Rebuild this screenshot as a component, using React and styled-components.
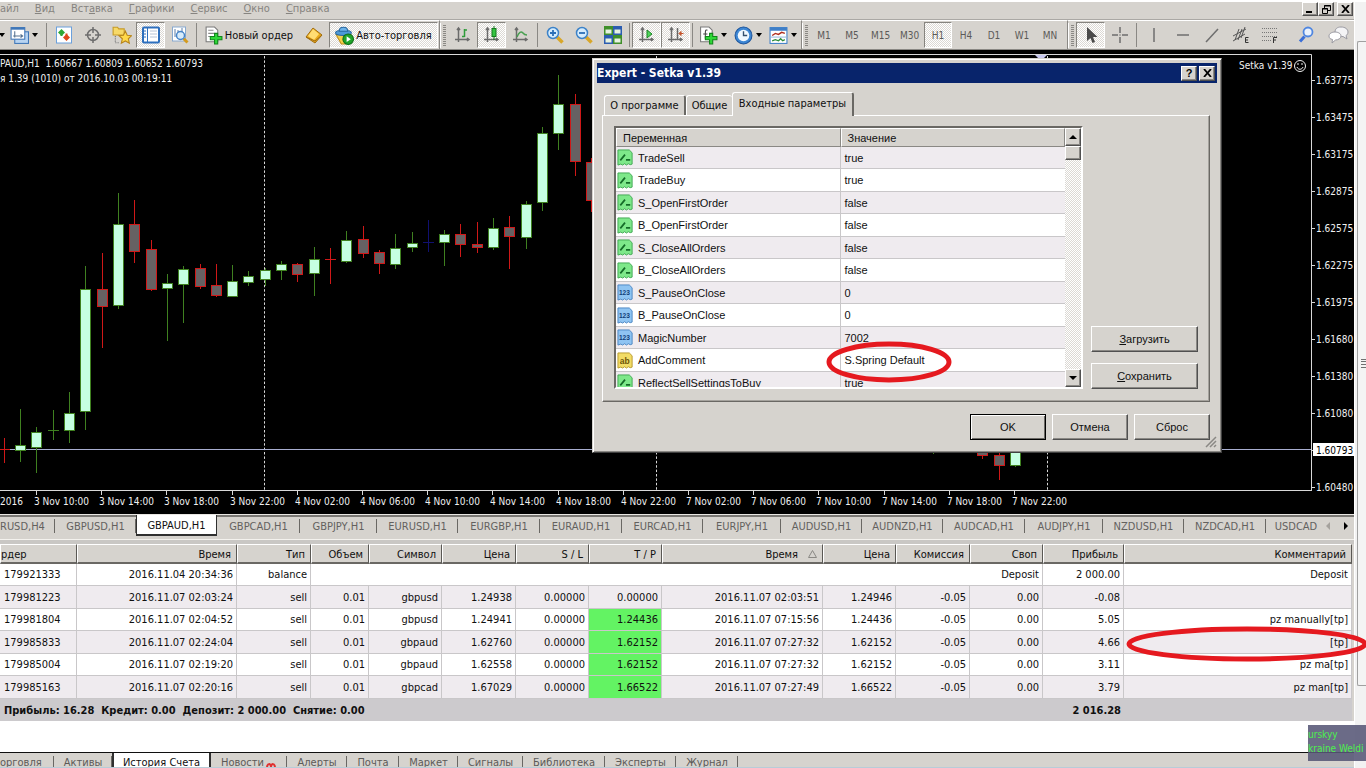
import React from 'react'
import styled, { createGlobalStyle, css } from 'styled-components'

const GlobalStyle = createGlobalStyle`
  * {
    box-sizing: border-box;
  }

  body {
    margin: 0;
    background: #d6d3ce;
    font-family: "DejaVu Sans Condensed", "DejaVu Sans", sans-serif;
    font-size: 11px;
    color: #101010;
    overflow: hidden;
  }

  button {
    font: inherit;
    color: inherit;
    border: 0;
    padding: 0;
    background: none;
  }

  svg {
    display: block;
    flex: none;
  }
`

const raised = css`
  border: 1px solid;
  border-color: #fff #505050 #505050 #fff;
  box-shadow: inset -1px -1px 0 #8a8884;
`

const dither = css`
  background: repeating-conic-gradient(#ffffff 0 25%, #dcd9d4 0 50%) 0 0 / 2px 2px;
`

const Page = styled.div`
  position: relative;
  display: flex;
  height: 100vh;
  overflow: hidden;
`

const Terminal = styled.main`
  flex: 1;
  min-width: 0;
  display: flex;
  flex-direction: column;
  background: #d6d3ce;
  border-top: 2px solid #fff;
`

/* menu */

const MenuBar = styled.nav`
  display: flex;
  align-items: flex-start;
  height: 17px;
  color: #868480;
`

const MenuList = styled.div`
  flex: 1;
  display: flex;
  gap: 16px;

  a {
    color: inherit;
    text-decoration: none;
    line-height: 14px;
  }
`

const WindowButtons = styled.div`
  display: flex;
  padding-right: 1px;

  button:last-child {
    margin-left: 3px;
  }
`

const SquareButton = styled.button`
  ${raised}
  display: flex;
  align-items: center;
  justify-content: center;
  width: 16px;
  height: ${p => p.$h || 14}px;
  background: #d6d3ce;
  color: #000;
`

/* toolbar */

const ToolRow = styled.div`
  display: flex;
  height: 31px;
  border-top: 1px solid #aaa8a4;
  border-bottom: 1px solid #8a8884;
  overflow: hidden;
`

const ToolGroup = styled.div`
  display: flex;
  align-items: center;
  padding-right: ${p => p.$end || 0}px;
  border-top: 1px solid #fff;
  border-right: ${p => (p.$fill ? 0 : 1)}px solid #8a8884;
  flex: ${p => (p.$fill ? 1 : 'none')};
`

const Grip = styled.span`
  width: 8px;
  height: 25px;
  border-left: 1px solid #fff;
  background: repeating-linear-gradient(#8a8884 0 1px, transparent 1px 2px) 2px 2px / 3px 21px no-repeat;
`

const Tool = styled.button`
  display: flex;
  align-items: center;
  justify-content: center;
  gap: ${p => p.$gap || 4}px;
  flex: none;
  width: ${p => p.$w || 29}px;
  height: 26px;
  font-size: ${p => (p.$period ? 10 : 11)}px;
  color: ${p => (p.$period ? '#5c5a58' : '#101010')};
  white-space: nowrap;
  ${p => p.$on && css`
    ${dither}
    border: 1px solid;
    border-color: #86847f #fff #fff #86847f;
  `}
`

const Split = styled.span`
  width: 5px;
  height: 24px;
  background: linear-gradient(#8a8884, #8a8884) 2px 0 / 1px 100% no-repeat;
`

const RightTools = styled.div`
  display: flex;
  margin-left: auto;
`

/* chart */

const ChartArea = styled.section`
  position: relative;
  flex: 1;
  min-height: 0;
  background: #000;

  > svg {
    width: 100%;
    height: 100%;
  }

  > svg text {
    font-size: 10px;
    fill: #f0f0f0;
  }
`

/* expert dialog */

const Dialog = styled.section`
  position: absolute;
  left: 592px;
  top: 8px;
  width: 630px;
  padding: 4px;
  background: #d6d3ce;
  border: 1px solid;
  border-color: #d6d3ce #404040 #404040 #d6d3ce;
  box-shadow: inset 1px 1px 0 #fff, inset -1px -1px 0 #8a8884;
  font-family: "Liberation Sans", Arial, sans-serif;
`

const TitleBar = styled.header`
  display: flex;
  align-items: center;
  gap: 2px;
  height: 20px;
  padding: 0 2px 0 0;
  background: #08246b;
  color: #fff;

  h2 {
    flex: 1;
    margin: 0;
    font: bold 12px "DejaVu Sans Condensed", "DejaVu Sans", sans-serif;
  }
`

const DialogTabs = styled.div`
  display: flex;
  align-items: flex-end;
  height: 32px;
  padding-left: 7px;
`

const DialogTab = styled.button`
  width: ${p => p.$w}px;
  height: ${p => (p.$on ? 24 : 20)}px;
  margin-bottom: ${p => (p.$on ? -1 : 0)}px;
  padding-bottom: ${p => (p.$on ? 3 : 0)}px;
  background: #d6d3ce;
  border: 1px solid #fff;
  border-bottom: 0;
  border-right: ${p => (p.$flat ? '0' : '2px solid #6a6864')};
  border-radius: 3px 3px 0 0;
  font-family: "DejaVu Sans Condensed", "DejaVu Sans", sans-serif;
  white-space: nowrap;
  z-index: ${p => (p.$on ? 1 : 0)};
`

const TabPanel = styled.div`
  display: flex;
  gap: 8px;
  margin: 0 7px 0 5px;
  padding: 10px 11px 12px 11px;
  border: 1px solid;
  border-color: #fff #6a6864 #6a6864 #fff;
  box-shadow: inset -1px -1px 0 #a5a29d;
`

const ListBox = styled.div`
  display: flex;
  flex: 1;
  height: 263px;
  overflow: hidden;
  border: 2px solid;
  border-color: #6a6864 #fff #fff #6a6864;
  background: #fff;
`

const ListBody = styled.div`
  flex: 1;
  min-width: 0;
`

const ParamTable = styled.table`
  width: 100%;
  border-collapse: separate;
  border-spacing: 0;
  table-layout: fixed;

  th {
    height: 19px;
    padding: 0 6px;
    background: #d6d3ce;
    border: 1px solid;
    border-color: #fff #8a8884 #8a8884 #fff;
    font-weight: normal;
    text-align: left;
  }

  td {
    height: 22px;
    padding: 0 4px;
    border-bottom: 1px solid #c9c7c9;
    line-height: 14px;
  }

  tr:nth-child(even) td {
    height: 23px;
  }

  tbody tr:nth-child(odd) {
    background: #efebef;
  }

  td:first-child {
    padding-left: 1px;
    border-right: 1px solid #c9c7c9;
  }
`

const ParamName = styled.span`
  display: flex;
  align-items: center;
  gap: 4px;
`

const ScrollTrack = styled.div`
  ${dither}
  display: flex;
  flex-direction: column;
  width: 16px;
`

const ScrollThumb = styled.div`
  ${raised}
  height: 14px;
  background: #d6d3ce;
  margin-bottom: auto;
`

const SideButtons = styled.div`
  display: flex;
  flex-direction: column;
  justify-content: flex-end;
  gap: 11px;
  width: 107px;
`

const PushButton = styled.button`
  ${raised}
  height: 26px;
  min-width: 76px;
  background: #d6d3ce;
  font-size: 11px;
  ${p => p.$default && css`
    border-color: #000;
    box-shadow: inset 1px 1px 0 #fff, inset -1px -1px 0 #6a6864;
  `}
`

const DialogFooter = styled.footer`
  position: relative;
  display: flex;
  justify-content: flex-end;
  gap: 6px;
  padding: 12px 7px 8px;
`

const ResizeGrip = styled.svg`
  position: absolute;
  right: 0;
  bottom: 0;
`

/* symbol tabs */

const SymbolTabs = styled.div`
  display: flex;
  height: 26px;
  padding-bottom: 3px;
  border-top: 1px solid #e8e6e2;
  border-bottom: 1px solid #f4f2ee;
  box-shadow: inset 0 2px 0 #7a7874;
  color: #63615e;
  overflow: hidden;
`

const SymbolTab = styled.button`
  flex: none;
  width: ${p => p.$w}px;
  padding-top: 1px;
  text-align: ${p => (p.$first ? 'left' : 'center')};
  white-space: nowrap;
  background: linear-gradient(#6a6864, #6a6864) right 4px / 1px 14px no-repeat;
  ${p => p.$plain && css`background: none;`}
  ${p => p.$on && css`
    background: #fff;
    color: #101010;
    padding-top: 2px;
    border: solid #303030;
    border-width: 0 1px 2px;
  `}
`

const TabArrows = styled.span`
  display: flex;
  align-items: center;
  gap: 14px;
  margin-left: auto;
  padding-right: 6px;
`

/* account history */

const History = styled.section`
  background: #fff;
  padding-bottom: 31px;
  border-top: 4px solid #c9c7c4;
`

const HistoryTable = styled.table`
  width: 100%;
  table-layout: fixed;
  border-collapse: separate;
  border-spacing: 0;
  border-right: 2px solid #d6d3ce;
  text-align: right;
  white-space: nowrap;

  th {
    height: 20px;
    padding: 1px 5px 0;
    background: #d6d3ce;
    border: 1px solid #fff;
    border-right: 1px solid #5a5854;
    border-bottom: 2px solid #6a6864;
    font-weight: normal;
  }

  td {
    height: 22px;
    padding: 1px 3px 0;
    border-right: 1px solid #c9c7c9;
    border-bottom: 1px solid #c9c7c9;
    line-height: 14px;
  }

  tr:nth-child(even) td {
    height: 23px;
  }

  tbody tr:nth-child(even) {
    background: #efebef;
  }

  th:first-child {
    text-align: left;
    padding-left: 0;
  }

  td:first-child {
    text-align: left;
    padding-left: 4px;
  }

  tfoot td {
    background: #cccacd;
    border: 0;
    font-weight: bold;
  }
`

const PriceCell = styled.td`
  background: ${p => (p.$hit ? '#63f363' : 'transparent')};
  background-clip: padding-box;
`

const SortMark = styled.svg`
  display: inline-block;
  margin-left: 10px;
`

const BottomTabs = styled.div`
  display: flex;
  height: 16px;
  overflow: hidden;
  border-top: 1px solid #101010;
  border-bottom: 1px solid #b8ccd8;
  color: #5c5a58;
`

const BottomTab = styled.button`
  display: flex;
  align-items: flex-start;
  justify-content: center;
  flex: none;
  width: ${p => p.$w}px;
  height: 24px;
  padding-top: 3px;
  line-height: 13px;
  background: linear-gradient(#6a6864, #6a6864) right 3px / 1px 14px no-repeat;
  white-space: nowrap;
  ${p => p.$first && css`justify-content: flex-start;`}
  ${p => p.$on && css`
    background: #fff;
    color: #101010;
    margin-top: -1px;
    padding-top: 4px;
    border: solid #303030;
    border-width: 0 2px;
  `}
`

/* outer window */

const OuterScroll = styled.aside`
  width: 12px;
  padding: 39px 0 82px 2px;
  background: #f2f2f2;
  border-top: 2px solid #fff;
  border-left: 1px solid #fff;

  div {
    height: 100%;
    border: 1px solid #a0a0a0;
    border-right: 0;
    border-radius: 2px 0 0 2px;
    background: #f4f4f4;
    display: flex;
    align-items: center;
    justify-content: flex-end;
  }
`

const Watermark = styled.div`
  position: absolute;
  right: 0;
  bottom: 7px;
  min-width: 58px;
  height: 36px;
  padding-top: 3px;
  background: rgba(86, 86, 118, 0.88);
  color: #4df04d;
  font-size: 10px;
  line-height: 14px;
  white-space: nowrap;
`

const Marks = styled.svg`
  position: absolute;
  left: 0;
  top: 0;
  width: 100%;
  height: 100%;
  pointer-events: none;
`

const Down = () => (
  <svg width="6" height="4"><path d="M0 0h6L3 4z" fill="#000" /></svg>
)

const Icon = ({ size = 18, children }) => (
  <svg width={size} height={size} viewBox="0 0 18 18" fill="none">{children}</svg>
)

const Axes = () => (
  <path d="M4.5 2v14M1 13.5h14M3 4l1.500-2L6 4M13 12l2 1.500-2 1.500" stroke="#6b6b6b" strokeWidth="1.500" />
)

const Plus = () => (
  <path d="M10 8h3v3h4v3h-4v4h-3v-4H6v-3h4z" fill="#2fd838" stroke="#11841a" transform="translate(0 -1)" />
)

const icons = {
  windows: (
    <Icon size={19}>
      <rect x="4.500" y="5.500" width="13" height="11" fill="#b8d4f2" stroke="#3f76b8" />
      <rect x="1" y="1.500" width="13" height="11" fill="#fff" stroke="#3f76b8" />
      <path d="M1 2.500h13" stroke="#3f76b8" strokeWidth="2" />
      <path d="M4.500 5v6M3 9.500h9M10 8l2 1.500-2 1.500" stroke="#55718f" />
    </Icon>
  ),
  market: (
    <Icon>
      <rect x="1.500" y="1" width="15" height="16" fill="#fff" stroke="#6ba0dc" />
      <path d="M6.500 3L10 6.500 6.500 10 3 6.500z" fill="#2ea836" />
      <path d="M5.500 7h2v3h-2z" fill="#2ea836" />
      <path d="M11.500 8L15 11.500 11.500 15 8 11.500z" fill="#e0491c" />
      <path d="M10.500 7.500h2v3h-2z" fill="#e0491c" />
    </Icon>
  ),
  target: (
    <Icon>
      <circle cx="9" cy="9" r="5.500" stroke="#6e6e6e" strokeWidth="1.500" />
      <path d="M9 1v6M9 11v6M1 9h6M11 9h6" stroke="#6e6e6e" strokeWidth="1.500" />
    </Icon>
  ),
  favorites: (
    <Icon size={20}>
      <path d="M1 2h4l1 1.500h5V9H1z" fill="#f7d968" stroke="#c79b25" />
      <path d="M3 10v6h4" stroke="#777" strokeDasharray="1 1" />
      <path d="M12 5.500l1.700 3.700 4 .4-3 2.800.9 4-3.600-2-3.600 2 .9-4-3-2.800 4-.4z" fill="#ffd94a" stroke="#b8861b" />
    </Icon>
  ),
  navigator: (
    <Icon>
      <rect x="1" y="1.500" width="16" height="15" rx="1" fill="#fff" stroke="#2d6fbd" strokeWidth="2" />
      <path d="M5.500 2v14" stroke="#2d6fbd" />
      <path d="M2 5h2M2 8h2M2 11h2" stroke="#2d6fbd" />
      <path d="M8 5h7M8 8h7M8 11h7" stroke="#b6c4d6" />
    </Icon>
  ),
  tester: (
    <Icon>
      <rect x="1.500" y="1" width="13" height="14" fill="#fff" stroke="#88a9cf" />
      <path d="M4 3v8M7 4v7M11 2v7" stroke="#5b7da8" />
      <path d="M12.500 12.500l4 4" stroke="#d49b1f" strokeWidth="3" />
      <circle cx="9.500" cy="9.500" r="4" fill="#d8ecfb" stroke="#4684c8" strokeWidth="1.500" />
    </Icon>
  ),
  order: (
    <Icon size={19}>
      <path d="M2 1h8l3 3v11H2z" fill="#fff" stroke="#7a7a7a" />
      <path d="M4 4h5M4 7h6M4 10h4" stroke="#8a8a8a" />
      <Plus />
    </Icon>
  ),
  gold: (
    <Icon>
      <path d="M1 11L8 2l9 7-7 8z" fill="#e9a91c" stroke="#a06d10" />
      <path d="M3 10l5-7 6 5-5 6z" fill="#ffdc73" />
      <path d="M1 11l9 4 7-6" stroke="#a06d10" />
    </Icon>
  ),
  auto: (
    <Icon size={19}>
      <path d="M1 8h14l-5 9H6z" fill="#f5cf4b" stroke="#c29018" />
      <ellipse cx="8" cy="6.500" rx="7.500" ry="2.500" fill="#4d9ad8" stroke="#2768a0" />
      <path d="M4 5c0-5 8-5 8 0z" fill="#6db4ea" stroke="#2768a0" />
      <circle cx="12.500" cy="12.500" r="5" fill="#20a52a" stroke="#0c6c14" />
      <path d="M11 9.800l4 2.700-4 2.700z" fill="#fff" />
    </Icon>
  ),
  bars: <Icon><Axes /><path d="M10.500 3v8M10.500 4H13M8 10.500h2.500" stroke="#2f9c3a" strokeWidth="1.500" /></Icon>,
  candles: (
    <Icon><Axes /><path d="M11 0v14" stroke="#14791d" /><rect x="9" y="2.500" width="4" height="8" fill="#34c440" stroke="#14791d" /></Icon>
  ),
  line: <Icon><Axes /><path d="M5 11c2-5 4-6 6-4 1 1.500 2 2 4 2" stroke="#4aa052" strokeWidth="1.500" /></Icon>,
  zoomIn: (
    <Icon>
      <path d="M11 11l5.500 5.500" stroke="#d8a72a" strokeWidth="3.500" />
      <circle cx="7" cy="7" r="5.500" fill="#d5ecfd" stroke="#3c82c8" strokeWidth="1.500" />
      <path d="M4 7h6M7 4v6" stroke="#2a6fb8" strokeWidth="1.800" />
    </Icon>
  ),
  zoomOut: (
    <Icon>
      <path d="M11 11l5.500 5.500" stroke="#d8a72a" strokeWidth="3.500" />
      <circle cx="7" cy="7" r="5.500" fill="#d5ecfd" stroke="#3c82c8" strokeWidth="1.500" />
      <path d="M4 7h6" stroke="#2a6fb8" strokeWidth="1.800" />
    </Icon>
  ),
  tile: (
    <Icon>
      <path d="M0 0h9v9H0z" fill="#3f8f2a" />
      <path d="M9 0h9v9H9z" fill="#2b5cb0" />
      <path d="M0 9h9v9H0z" fill="#2b5cb0" />
      <path d="M9 9h9v9H9z" fill="#3f8f2a" />
      <path d="M1.500 3.500h6v4h-6zM10.500 3.500h6v4h-6zM1.500 12.500h6v4h-6zM10.500 12.500h6v4h-6z" fill="#e6f2e0" />
    </Icon>
  ),
  scroll: <Icon><Axes /><path d="M9 4l5 4-5 4z" fill="#4ed45a" stroke="#1b8424" /></Icon>,
  shift: (
    <Icon><Axes /><path d="M10.500 2v11" stroke="#666" strokeWidth="1.500" /><path d="M16.500 7.500H13M14 5.500l-2 2 2 2z" fill="#c4532a" stroke="#c4532a" /></Icon>
  ),
  indicator: (
    <Icon size={19}>
      <path d="M1.500 1h8l3 3v11h-11z" fill="#fff" stroke="#7a7a7a" />
      <path d="M8 4c-2-1-2 1-2 3v5M4 7.500h4" stroke="#444" />
      <Plus />
    </Icon>
  ),
  clock: (
    <Icon size={19}>
      <circle cx="9" cy="9" r="8" fill="#3c86d4" stroke="#1d559c" />
      <circle cx="9" cy="9" r="5.500" fill="#f0f8ff" />
      <path d="M9 5v4h3.500" stroke="#35506e" strokeWidth="1.300" />
    </Icon>
  ),
  template: (
    <Icon size={19}>
      <rect x="1" y="1.500" width="16" height="15" fill="#fff" stroke="#3f7fc8" />
      <path d="M1 3h16" stroke="#3f7fc8" strokeWidth="3" />
      <path d="M3 9l3-2 3 1 3-2 3 1" stroke="#b02c1c" strokeWidth="1.300" />
      <path d="M1 10.500h16" stroke="#9ab8dc" />
      <path d="M3 14l3-1 3 1 2-2 2 2 2-1" stroke="#2c8c3a" strokeWidth="1.300" />
    </Icon>
  ),
  cursor: <Icon><path d="M5 1v14l3.500-3 2 5 2.500-1-2-5h4.500z" fill="#4a4a4a" /></Icon>,
  cross: <Icon><path d="M9 1v6M9 11v6M1 9h6M11 9h6M8.500 9h1" stroke="#6e6e6e" strokeWidth="1.500" /></Icon>,
  vline: <Icon><path d="M9 2v14" stroke="#6e6e6e" strokeWidth="1.500" /></Icon>,
  hline: <Icon><path d="M3 9h12" stroke="#6e6e6e" strokeWidth="1.500" /></Icon>,
  trend: <Icon><path d="M3 16L15 3" stroke="#6e6e6e" strokeWidth="1.500" /></Icon>,
  channel: (
    <Icon>
      <path d="M1 10L14 3M1 15l12-7M3 14L7 3M6 14l4-11M9 12l4-11" stroke="#555" />
      <path d="M16.500 11.500h-3v5h3M13.500 14h2.500" stroke="#333" />
    </Icon>
  ),
  fibo: (
    <Icon>
      <path d="M1 2.500h15M1 6.500h15M1 10.500h15M1 14.500h9" stroke="#777" strokeDasharray="1 1" />
      <path d="M12.500 17v-5.500H16M12.500 14H15" stroke="#333" />
    </Icon>
  ),
  search: (
    <Icon>
      <path d="M7.500 10.500L3 15.500" stroke="#3a6fd8" strokeWidth="3" />
      <circle cx="11" cy="6" r="4.500" fill="#eaf2fd" stroke="#4f86e0" strokeWidth="1.800" />
    </Icon>
  ),
  chat: (
    <svg width="22" height="18" fill="none">
      <path d="M13 1c4 0 7 2 7 5 0 2-1 3-2 3.500l1 3.500-4-2.500c-5 .5-8-1-8-4.500 0-3 2-5 6-5z" fill="#f4f4f6" stroke="#9a9aa2" />
      <path d="M7 6c3 0 6 1.500 6 4s-3 4-5.500 4L4 17l.5-3.500C2 13 1 12 1 10c0-2.500 3-4 6-4z" fill="#fff" stroke="#9a9aa2" />
    </svg>
  )
}

const page = 'M1 1h12l3 3v12l-2 .6-2-1-2 1.400-2-1.400-2 1.400-2-1-3 1z'

const paramIcons = {
  bool: (
    <Icon size={17}>
      <path d={page} fill="#7ee88a" stroke="#3fa852" />
      <path d="M3.500 12l5-6M9.500 11.500H14" stroke="#146b28" strokeWidth="1.800" />
    </Icon>
  ),
  int: (
    <Icon size={17}>
      <path d={page} fill="#8fc4f2" stroke="#4a86c4" />
      <text x="2" y="12" fontSize="7" fontWeight="bold" fill="#123f78">123</text>
    </Icon>
  ),
  string: (
    <Icon size={17}>
      <path d={page} fill="#f2dc66" stroke="#b89a2c" />
      <text x="3" y="13" fontSize="9" fontWeight="bold" fill="#6e5508">ab</text>
    </Icon>
  )
}

const menu = [['В', 'ид'], ['Вст', 'авка', 3], ['Г', 'рафики'], ['С', 'ервис'], ['О', 'кно'], ['С', 'правка']]

// x, high, body top, body bottom, low, kind (u - up, d - down, n - flat)
const candles = [
  [4, 438, 449, 449, 463, 'd'], [20, 409, 445, 450, 462, 'u'], [36, 427, 432, 447, 473, 'u'],
  [53, 410, 430, 430, 440, 'u'], [69, 392, 413, 430, 443, 'u'], [85, 266, 289, 411, 430, 'u'],
  [102, 253, 289, 306, 348, 'd'], [118, 193, 224, 305, 309, 'u'], [134, 200, 224, 251, 263, 'd'],
  [151, 240, 249, 289, 291, 'd'], [167, 274, 283, 288, 341, 'u'], [183, 266, 269, 284, 323, 'u'],
  [200, 264, 268, 286, 289, 'd'], [216, 264, 285, 295, 297, 'd'], [232, 265, 281, 296, 296, 'u'],
  [248, 271, 276, 282, 286, 'u'], [265, 268, 270, 279, 286, 'u'], [281, 261, 264, 270, 280, 'u'],
  [297, 263, 264, 274, 282, 'd'], [314, 247, 259, 273, 296, 'u'], [330, 248, 259, 259, 284, 'd'],
  [346, 231, 240, 261, 263, 'u'], [363, 226, 239, 253, 258, 'd'], [379, 250, 252, 263, 274, 'd'],
  [395, 234, 248, 264, 269, 'u'], [412, 232, 243, 247, 252, 'u'], [428, 220, 242, 242, 252, 'n'],
  [444, 230, 234, 242, 266, 'u'], [460, 224, 234, 244, 257, 'd'], [477, 222, 244, 247, 253, 'd'],
  [493, 218, 228, 247, 250, 'u'], [509, 216, 227, 236, 269, 'd'], [526, 201, 204, 237, 249, 'u'],
  [542, 127, 133, 202, 211, 'u'], [558, 75, 104, 133, 150, 'u'], [575, 94, 104, 161, 176, 'd'],
  [591, 158, 162, 200, 212, 'd'], [933, 440, 440, 440, 454, 'u'], [982, 440, 447, 455, 459, 'd'],
  [999, 445, 455, 465, 480, 'd'], [1015, 440, 445, 465, 467, 'u']
]

const candleStroke = { u: '#3f8020', d: '#d01818', n: '#101070' }

const prices = ['1.63775', '1.63475', '1.63175', '1.62875', '1.62575', '1.62275', '1.61975', '1.61680', '1.61380', '1.61080', '1.60793', '1.60480']

const times = [
  '3 Nov 10:00', '3 Nov 14:00', '3 Nov 18:00', '3 Nov 22:00', '4 Nov 02:00', '4 Nov 06:00', '4 Nov 10:00', '4 Nov 14:00',
  '4 Nov 18:00', '4 Nov 22:00', '7 Nov 02:00', '7 Nov 06:00', '7 Nov 10:00', '7 Nov 14:00', '7 Nov 18:00', '7 Nov 22:00'
]

const params = [
  ['bool', 'TradeSell', 'true'],
  ['bool', 'TradeBuy', 'true'],
  ['bool', 'S_OpenFirstOrder', 'false'],
  ['bool', 'B_OpenFirstOrder', 'false'],
  ['bool', 'S_CloseAllOrders', 'false'],
  ['bool', 'B_CloseAllOrders', 'false'],
  ['int', 'S_PauseOnClose', '0'],
  ['int', 'B_PauseOnClose', '0'],
  ['int', 'MagicNumber', '7002'],
  ['string', 'AddComment', 'S.Spring Default'],
  ['bool', 'ReflectSellSettingsToBuy', 'true']
]

const symbols = [
  ['GBPUSD,H1', 81], ['GBPAUD,H1', 81], ['GBPCAD,H1', 83], ['GBPJPY,H1', 77], ['EURUSD,H1', 81], ['EURGBP,H1', 82],
  ['EURAUD,H1', 82], ['EURCAD,H1', 81], ['EURJPY,H1', 78], ['AUDUSD,H1', 81], ['AUDNZD,H1', 81], ['AUDCAD,H1', 82],
  ['AUDJPY,H1', 78], ['NZDUSD,H1', 81], ['NZDCAD,H1', 82]
]

const columns = [
  ['рдер', 77], ['Время', 160], ['Тип', 74], ['Объем', 58], ['Символ', 73], ['Цена', 74], ['S / L', 73], ['T / P', 73],
  ['Время', 161, true], ['Цена', 73], ['Комиссия', 74], ['Своп', 73], ['Прибыль', 81], ['Комментарий']
]

const orders = [
  ['179981223', '2016.11.07 02:03:24', 'sell', '0.01', 'gbpusd', '1.24938', '0.00000', '0.00000', '2016.11.07 02:03:51', '1.24946', '-0.05', '0.00', '-0.08', ''],
  ['179981804', '2016.11.07 02:04:52', 'sell', '0.01', 'gbpusd', '1.24941', '0.00000', '1.24436', '2016.11.07 07:15:56', '1.24436', '-0.05', '0.00', '5.05', 'pz manually[tp]'],
  ['179985833', '2016.11.07 02:24:04', 'sell', '0.01', 'gbpaud', '1.62760', '0.00000', '1.62152', '2016.11.07 07:27:32', '1.62152', '-0.05', '0.00', '4.66', '[tp]'],
  ['179985004', '2016.11.07 02:19:20', 'sell', '0.01', 'gbpaud', '1.62558', '0.00000', '1.62152', '2016.11.07 07:27:32', '1.62152', '-0.05', '0.00', '3.11', 'pz ma[tp]'],
  ['179985163', '2016.11.07 02:20:16', 'sell', '0.01', 'gbpcad', '1.67029', '0.00000', '1.66522', '2016.11.07 07:27:49', '1.66522', '-0.05', '0.00', '3.79', 'pz man[tp]']
]

const bottomTabs = [
  ['орговля', 54], ['Активы', 58], ['История Счета', 99], ['Новости', 76], ['Алерты', 60], ['Почта', 52], ['Маркет', 59],
  ['Сигналы', 65], ['Библиотека', 82], ['Эксперты', 71], ['Журнал', 62]
]

const Menu = () => (
  <MenuBar>
    <MenuList>
      <a href="#file">айл</a>
      {menu.map(([head, tail, at], i) => (
        <a href={'#menu' + i} key={i}>
          {at ? <>{head}<u>{tail[0]}</u>{tail.slice(1)}</> : <><u>{head}</u>{tail}</>}
        </a>
      ))}
    </MenuList>
    <WindowButtons>
      <SquareButton aria-label="Minimize"><svg width="8" height="8"><path d="M0 6h6v2H0z" /></svg></SquareButton>
      <SquareButton aria-label="Restore">
        <svg width="9" height="9" fill="none" stroke="#000"><path d="M2.500 3V.5h6v5H6M2 1h7M.5 3.500h5v5h-5zM0 4h6" /></svg>
      </SquareButton>
      <SquareButton aria-label="Close">
        <svg width="9" height="8"><path d="M1 0l7 8M8 0L1 8" stroke="#000" strokeWidth="1.800" /></svg>
      </SquareButton>
    </WindowButtons>
  </MenuBar>
)

const IconTools = ({ names, on = [] }) => names.map(name => (
  <Tool key={name} aria-label={name} $on={on.includes(name)}>{icons[name]}</Tool>
))

const Toolbar = () => (
  <ToolRow>
    <ToolGroup $end={1}>
      <Tool $w={4} aria-label="New chart"><Down /></Tool>
      <Tool $w={40} $gap={3} aria-label="Profiles">{icons.windows}<Down /></Tool>
      <Split />
      <IconTools names={['market', 'target', 'favorites', 'navigator', 'tester']} on={['navigator']} />
      <Split />
      <Tool $w={99} $gap={2}>{icons.order}Новый ордер</Tool>
      <Tool $w={31} aria-label="MetaEditor">{icons.gold}</Tool>
      <Tool $w={109} $gap={2} $on>{icons.auto}Авто-торговля</Tool>
    </ToolGroup>
    <ToolGroup>
      <Grip />
      <IconTools names={['bars', 'candles', 'line']} on={['candles']} />
      <Split />
      <IconTools names={['zoomIn', 'zoomOut', 'tile']} />
      <Split />
      <IconTools names={['scroll', 'shift']} on={['scroll', 'shift']} />
      <Split />
      <Tool $w={36} $gap={3} aria-label="Indicators">{icons.indicator}<Down /></Tool>
      <Tool $w={34} $gap={3} aria-label="Periods">{icons.clock}<Down /></Tool>
      <Tool $w={36} $gap={3} aria-label="Templates">{icons.template}<Down /></Tool>
    </ToolGroup>
    <ToolGroup $end={3}>
      <Grip />
      {['M1', 'M5', 'M15', 'M30', 'H1', 'H4', 'D1', 'W1', 'MN'].map(p => (
        <Tool key={p} $period $w={p.length > 2 ? 29 : 28} $on={p === 'H1'}>{p}</Tool>
      ))}
    </ToolGroup>
    <ToolGroup $fill>
      <Grip />
      <IconTools names={['cursor', 'cross']} on={['cursor']} />
      <Split />
      <IconTools names={['vline', 'hline', 'trend', 'channel', 'fibo']} />
      <RightTools>
        <Tool $w={34} aria-label="Search">{icons.search}</Tool>
        <Tool $w={31} aria-label="Chat">{icons.chat}</Tool>
      </RightTools>
    </ToolGroup>
  </ToolRow>
)

const Candle = ({ data: [x, high, top, bottom, low, kind] }) => {
  const color = candleStroke[kind]
  return (
    <g stroke={color} fill={kind === 'u' ? '#c6ffe2' : '#666163'}>
      <path d={`M${x + 0.5} ${high}V${low}`} />
      {top === bottom
        ? <path d={`M${x - 5} ${top + 0.5}h11`} />
        : <rect x={x - 4.5} y={top + 0.5} width="10" height={bottom - top} />}
    </g>
  )
}

const Chart = () => (
  <svg viewBox="0 50 1354 464" preserveAspectRatio="xMinYMin slice">
    <g stroke="#d8d8d8" fill="none">
      <path d="M0 54.500h1311.500V490.500M0 490.500h1312" />
      <path d="M264.500 56V490M656.500 56V490M1047.500 56V490" strokeDasharray="2.500 1.900" />
      {times.map((t, i) => <path key={t} d={`M${Math.round(36 + i * 65.2) + 0.5} 491v4`} />)}
      {prices.map((p, i) => <path key={p} d={`M1312 ${81 + i * 37 - 0.5}h3`} />)}
    </g>
    <path d="M0 449.500h1311" stroke="#a8aed0" />
    {candles.map(c => <Candle key={c[0]} data={c} />)}
    <path d="M1035 55h12l-6 6z" fill="#c8c8f0" />
    <text x="0" y="67">PAUD,H1&nbsp; 1.60667 1.60809 1.60652 1.60793</text>
    <text x="0" y="82">я 1.39 (1010) от 2016.10.03 00:19:11</text>
    <text x="1239" y="69">Setka v1.39</text>
    <g fill="none" stroke="#f0f0f0">
      <circle cx="1300" cy="66" r="5.500" />
      <path d="M1297 67c1 3 5 3 6 0M1298 63v2M1302 63v2" />
    </g>
    <rect x="1313" y="443" width="41" height="13" fill="#fff" />
    {prices.map((p, i) => (
      <text key={p} x="1316" y={i === 10 ? 454 : 84 + i * 37} style={i === 10 ? { fill: '#000' } : undefined}>{p}</text>
    ))}
    <text x="0" y="505">2016</text>
    {times.map((t, i) => <text key={t} x={Math.round(34 + i * 65.2)} y="505">{t}</text>)}
  </svg>
)

const ExpertDialog = () => (
  <Dialog role="dialog" aria-label="Expert">
    <TitleBar>
      <h2>Expert - Setka v1.39</h2>
      <SquareButton $h={15}><b>?</b></SquareButton>
      <SquareButton $h={15} aria-label="Close">
        <svg width="9" height="8"><path d="M1 0l7 8M8 0L1 8" stroke="#000" strokeWidth="1.800" /></svg>
      </SquareButton>
    </TitleBar>
    <DialogTabs>
      <DialogTab $w={82}>О программе</DialogTab>
      <DialogTab $w={46} $flat>Общие</DialogTab>
      <DialogTab $w={122} $on>Входные параметры</DialogTab>
    </DialogTabs>
    <TabPanel>
      <ListBox>
        <ListBody>
          <ParamTable>
            <colgroup><col width="50%" /><col /></colgroup>
            <thead>
              <tr><th>Переменная</th><th>Значение</th></tr>
            </thead>
            <tbody>
              {params.map(([type, name, value]) => (
                <tr key={name}>
                  <td><ParamName>{paramIcons[type]}{name}</ParamName></td>
                  <td>{value}</td>
                </tr>
              ))}
            </tbody>
          </ParamTable>
        </ListBody>
        <ScrollTrack>
          <SquareButton $h={18} aria-label="Scroll up"><svg width="8" height="4"><path d="M0 4h8L4 0z" /></svg></SquareButton>
          <ScrollThumb />
          <SquareButton $h={18} aria-label="Scroll down"><svg width="8" height="4"><path d="M0 0h8L4 4z" /></svg></SquareButton>
        </ScrollTrack>
      </ListBox>
      <SideButtons>
        <PushButton><u>З</u>агрузить</PushButton>
        <PushButton><u>С</u>охранить</PushButton>
      </SideButtons>
    </TabPanel>
    <DialogFooter>
      <PushButton $default>OK</PushButton>
      <PushButton>Отмена</PushButton>
      <PushButton>Сброс</PushButton>
      <ResizeGrip width="12" height="12" stroke="#8a8884" strokeWidth="1.500">
        <path d="M1 11L11 1M5 11l6-6M9 11l2-2" />
      </ResizeGrip>
    </DialogFooter>
  </Dialog>
)

const HistoryPanel = () => (
  <History>
    <HistoryTable>
      <colgroup>
        {columns.map(([, w], i) => <col key={i} width={w} />)}
      </colgroup>
      <thead>
        <tr>
          {columns.map(([title, , sorted], i) => (
            <th key={i}>
              {title}
              {sorted && <SortMark width="9" height="8" fill="none" stroke="#8a8884"><path d="M.5 7.500h8L4.500.5z" /></SortMark>}
            </th>
          ))}
        </tr>
      </thead>
      <tbody>
        <tr>
          <td>179921333</td>
          <td>2016.11.04 20:34:36</td>
          <td>balance</td>
          <td colSpan="9">Deposit</td>
          <td>2 000.00</td>
          <td>Deposit</td>
        </tr>
        {orders.map(order => (
          <tr key={order[0]}>
            {order.map((value, i) => (
              <PriceCell key={i} $hit={i === 7 && value !== '0.00000'}>{value}</PriceCell>
            ))}
          </tr>
        ))}
      </tbody>
      <tfoot>
        <tr>
          <td colSpan="12">Прибыль: 16.28&nbsp; Кредит: 0.00&nbsp; Депозит: 2 000.00&nbsp; Снятие: 0.00</td>
          <td>2 016.28</td>
          <td />
        </tr>
      </tfoot>
    </HistoryTable>
  </History>
)

const App = () => (
  <Page>
    <GlobalStyle />
    <Terminal>
      <Menu />
      <Toolbar />
      <ChartArea>
        <Chart />
        <ExpertDialog />
      </ChartArea>
      <SymbolTabs>
        <SymbolTab $w={55} $first>RUSD,H4</SymbolTab>
        {symbols.map(([name, w]) => (
          <SymbolTab key={name} $w={w} $on={name === 'GBPAUD,H1'}>{name}</SymbolTab>
        ))}
        <SymbolTab $w={60} $plain>USDCAD</SymbolTab>
        <TabArrows>
          <svg width="4" height="8"><path d="M4 0v8L0 4z" fill="#a5a29d" /></svg>
          <svg width="4" height="8"><path d="M0 0v8l4-4z" fill="#000" /></svg>
        </TabArrows>
      </SymbolTabs>
      <HistoryPanel />
      <BottomTabs>
        {bottomTabs.map(([name, w], i) => (
          <BottomTab key={name} $w={w} $first={i === 0} $on={name === 'История Счета'}>
            {name}
            {name === 'Новости' && (
              <svg width="13" height="13" fill="none" stroke="#e03030" strokeWidth="2">
                <path d="M3 12c0-5 4-5 4-1 0-4 4-4 4 1" />
              </svg>
            )}
          </BottomTab>
        ))}
      </BottomTabs>
    </Terminal>
    <OuterScroll>
      <div>
        <svg width="5" height="9" stroke="#707070"><path d="M0 .5h5M0 2.500h5M0 5.500h5M0 8.500h5" /></svg>
      </div>
    </OuterScroll>
    <Marks fill="none" stroke="#e5191f" strokeWidth="5">
      <ellipse cx="889" cy="362" rx="60" ry="18" />
      <ellipse cx="1247" cy="644" rx="118" ry="15" />
    </Marks>
    <Watermark>urskyy<br />kraine Weldi</Watermark>
  </Page>
)

export default App
